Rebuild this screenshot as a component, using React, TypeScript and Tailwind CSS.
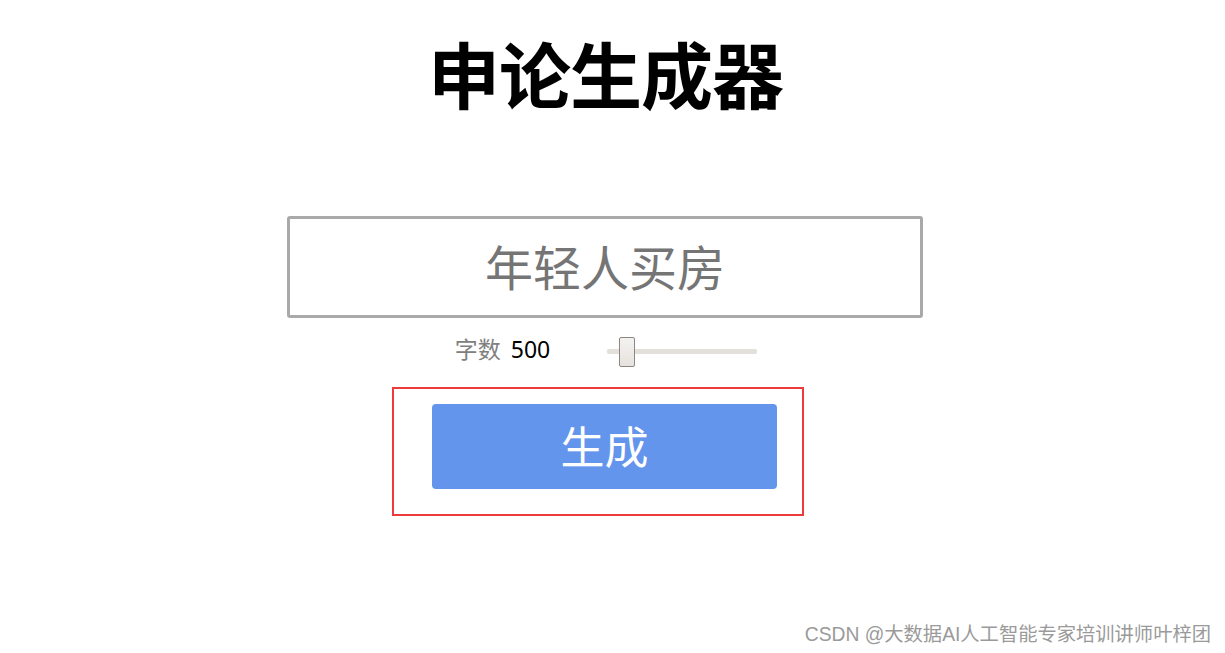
import React from "react";

export default function App() {
  const font = { fontFamily: '"Noto Sans", "Noto Sans CJK SC", sans-serif' };
  return (
    <div className="relative w-full h-[653px] bg-white overflow-hidden" style={font}>
      <div className="flex flex-col items-center">
        <h1 className="mt-[39px] text-[72px] leading-none font-bold text-black tracking-[-1px] ml-[-14px]">
          申论生成器
        </h1>
        <div className="mt-[105px] w-[636px] h-[102px] border-[3px] border-[#a9a9a9] rounded-[3px] flex items-center justify-center ml-[-16px]">
          <span className="text-[48px] leading-none text-[#757575] ml-[1px] mt-[2px]">年轻人买房</span>
        </div>
        <div className="mt-[18px] flex items-center h-[30px] ml-[-13px]">
          <div className="text-[23px] leading-none mt-[-3px]">
            <span className="text-[#808080]">字数</span>
            <span className="text-black ml-[10px]">500</span>
          </div>
          <div className="relative ml-[57px] w-[150px] h-[5px] bg-[#e3dfda] rounded-[2px]">
            <div className="absolute left-[12px] top-[-12px] w-[16px] h-[30px] rounded-[2px] border border-[#8c8782] bg-gradient-to-b from-[#f4f2f0] to-[#e6e2de]" />
          </div>
        </div>
        <div className="mt-[21px] w-[412px] h-[129px] border-2 border-[#ee3a3a] pl-[38px] pr-[25px] pt-[15px] ml-[-29px]">
          <button className="w-[345px] h-[85px] bg-[#6495ed] rounded-[4px] text-white text-[44px] leading-none flex items-center justify-center">
            生成
          </button>
        </div>
      </div>
      <div className="absolute right-[14px] bottom-[9px] text-[19.3px] text-[#9a9a9a] leading-none" style={{ fontFamily: '"Liberation Sans", "Noto Sans CJK SC", sans-serif' }}>
        CSDN @大数据AI人工智能专家培训讲师叶梓团
      </div>
    </div>
  );
}
